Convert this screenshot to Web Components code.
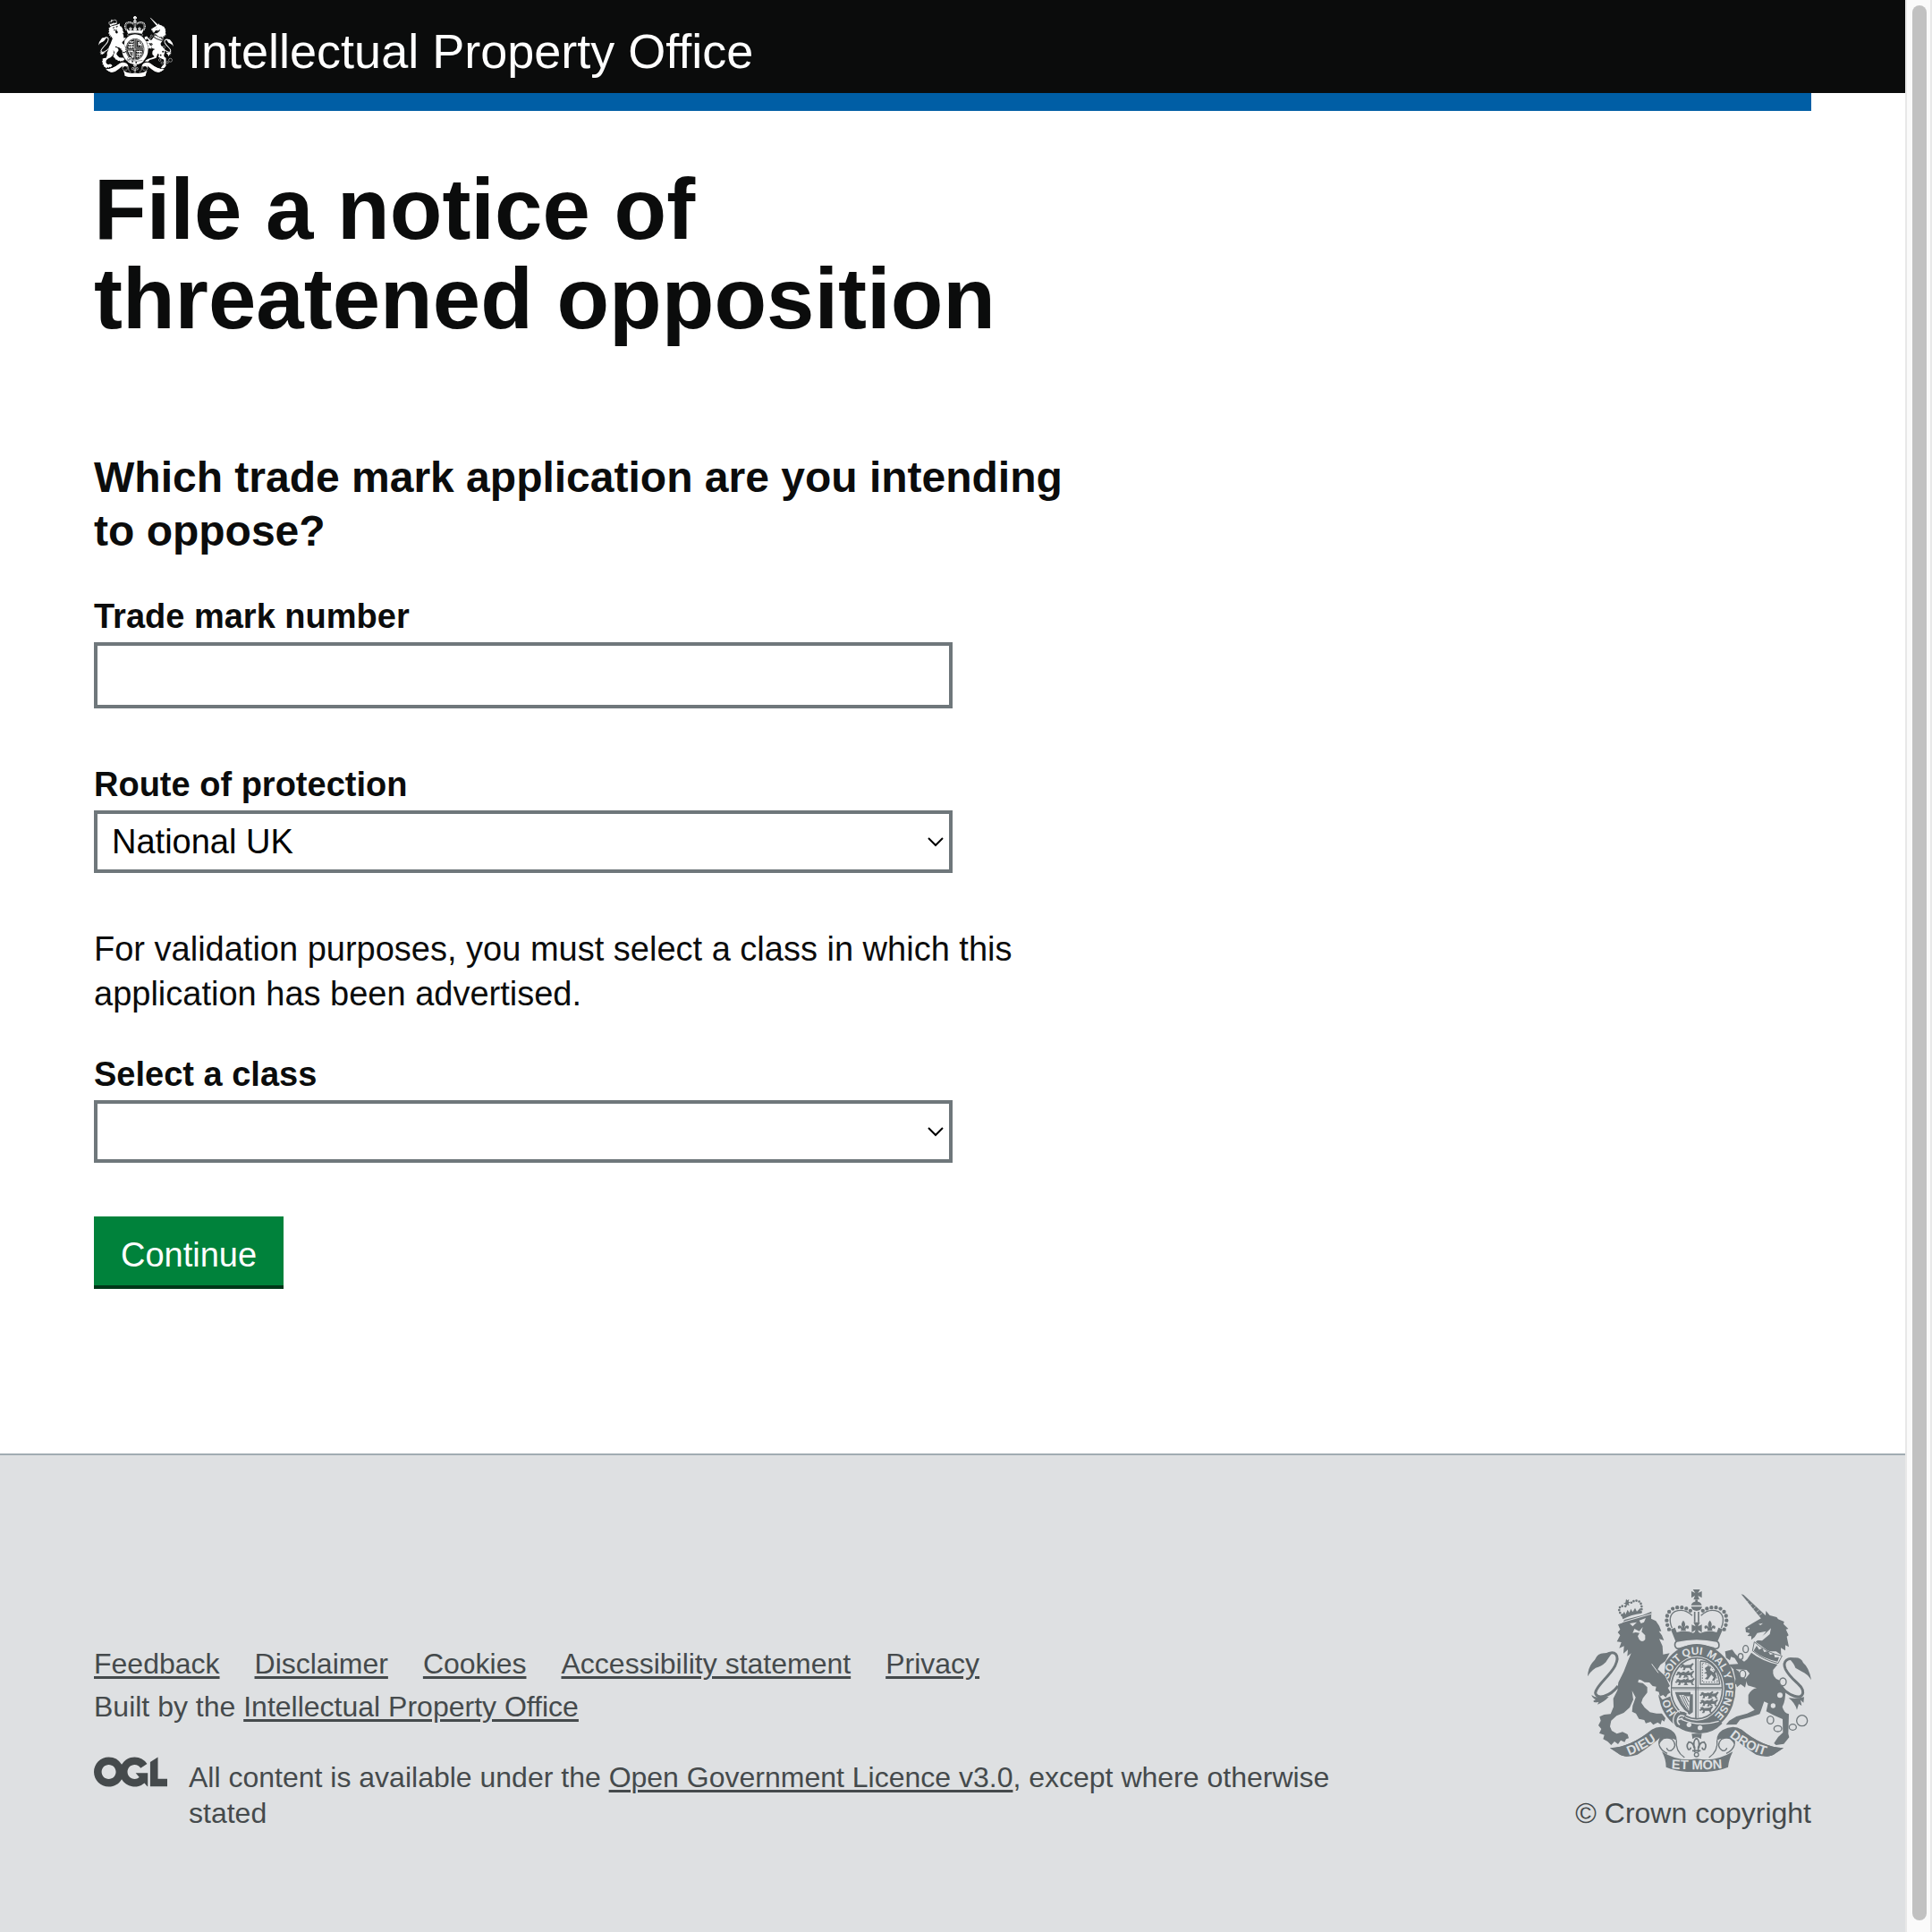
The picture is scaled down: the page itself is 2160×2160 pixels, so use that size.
<!DOCTYPE html>
<html lang="en">
<head>
<meta charset="utf-8">
<title>File a notice of threatened opposition</title>
<style>
  body { margin: 0; font-family: "Liberation Sans", Arial, sans-serif; color: #0b0c0c; background: #fff; }
</style>
</head>
<body>
<ipo-app></ipo-app>

<template id="crest-tpl">
  <style>
    :host { display: block; }
    svg { display: block; width: 100%; height: auto; }
    text { font: bold 44px "Liberation Sans", Arial, sans-serif; fill: var(--crest-gap); }
    .ring { font-size: 36px; }
    :host([plain]) text, :host([plain]) .fine { display: none; }
    .gap { fill: var(--crest-gap); }
    .line { fill: none; stroke: currentColor; }
    .gapline { fill: none; stroke: var(--crest-gap); }
  </style>
  <svg viewBox="105 50 750 613" fill="currentColor" role="img" aria-label="Royal coat of arms">
    <defs>
      <path id="ring" d="M471 496A98 114 0 0 1 471 268A98 114 0 0 1 471 496"/>
      <path id="left-scroll" d="M244 607Q300 586 356 543"/>
      <path id="mid-scroll" d="M382 650Q470 658 566 649"/>
      <path id="right-scroll" d="M580 543Q638 592 716 610"/>
      <g id="passant">
        <path d="M0 3l7-3 6 4 18-1 8-6 4 3-6 8-2 7 6 5-8 1-4-8-13 0-3 8-8 0 4-6-2-5-7 4-4-4 6-3z"/>
      </g>
      <g id="lily">
        <path d="M0-16Q-10-5-4 6L-4 17H4V6Q10-5 0-16Z"/>
        <path d="M-4 8Q-8-3-17 2Q-21 9-14 13Q-12 7-7 13L-9 19H9L7 13Q12 7 14 13Q21 9 17 2Q8-3 4 8Z"/>
      </g>
    </defs>

    <!-- crown -->
    <path d="M458 50H482L475 62 488 56V78L475 71 480 84H460L465 71 453 78V56L466 62Z"/>
    <path d="M466 84h8v8h-8z"/>
    <path d="M452 103A19 18 0 0 1 488 103ZM452 108H489A19 18 0 0 1 452 108Z"/>
    <path class="line" stroke-width="13" stroke-linecap="round" stroke-dasharray="0 15.5" d="M378 184C366 160 366 128 390 115C414 104 440 112 458 128"/>
    <path class="line" stroke-width="13" stroke-linecap="round" stroke-dasharray="0 15.5" d="M563 184C575 160 575 128 551 115C527 104 501 112 483 128"/>
    <path class="line" stroke-width="4" d="M388 180C378 155 380 134 398 124C418 116 440 122 456 138M553 180C563 155 561 134 543 124C523 116 501 122 485 138"/>
    <path class="line" stroke-width="5" d="M464 125V160M477 125V160"/>
    <path d="M384 184L398 178 404 194Q424 188 446 192L458 196Q470 190 484 196L498 192Q518 188 538 194L544 178 558 184 541 224Q470 208 400 224Z"/>
    <use href="#lily" x="426" y="170"/>
    <use href="#lily" x="515" y="170"/>
    <path d="M460 160H482L475 174 488 168V194L475 186 480 200H461L467 186 454 194V168L467 174Z"/>
    <path class="line" stroke-width="5" d="M404 224Q470 208 538 224Q548 228 545 243Q540 252 528 247Q470 228 416 247Q402 252 398 240Q396 228 404 224Z"/>

    <!-- garter and shield -->
    <ellipse cx="471" cy="382" rx="130" ry="149"/>
    <ellipse class="gap" cx="471" cy="382" rx="92" ry="108"/>
    <ellipse class="line" cx="471" cy="382" rx="86" ry="102" stroke-width="5"/>
    <g class="line" stroke-width="5"><path d="M468 280V484M385 380H557"/><path stroke-width="2" d="M475 286V480M390 386H552"/></g>
    <use href="#passant" transform="translate(418 300)"/>
    <use href="#passant" transform="translate(404 325)"/>
    <use href="#passant" transform="translate(420 325)"/>
    <use href="#passant" transform="translate(402 350)"/>
    <use href="#passant" transform="translate(422 350)"/>
    <g transform="translate(480 0)">
      <use href="#passant" transform="translate(4 394)"/>
      <use href="#passant" transform="translate(22 396)"/>
      <use href="#passant" transform="translate(4 420)"/>
      <use href="#passant" transform="translate(20 421)"/>
      <use href="#passant" transform="translate(3 444)"/>
    </g>
    <path class="line" stroke-width="4" d="M483 290V368H548M483 290Q540 290 548 368"/>
    <path class="line" stroke-width="3" stroke-dasharray="5 4" d="M490 300V361H541M490 297Q530 300 541 361"/>
    <path d="M498 314l12-8 9 6-4 8 12 8 11-14 3 4-8 15 4 10-7 14-8-2 6-10-8-9-12 16-10-2 8-8-2-9-9-2 9-6-4-6z"/>
    <path d="M398 394H450V402H458V462L446 470Q410 440 398 394ZM412 404Q418 436 445 457L448 408Q432 410 426 404Z" fill-rule="evenodd"/>
    <path class="line" stroke-width="3" d="M419 405L442 453M427 407L443 441M435 409L445 428M413 409L435 450"/>
    <text class="ring"><textPath href="#ring" startOffset="78">HO</textPath></text>
    <text class="ring"><textPath href="#ring" startOffset="196">SOIT</textPath></text>
    <text class="ring"><textPath href="#ring" startOffset="287">QUI</textPath></text>
    <text class="ring"><textPath href="#ring" startOffset="365">MAL</textPath></text>
    <text class="ring"><textPath href="#ring" startOffset="447">Y</textPath></text>
    <text class="ring"><textPath href="#ring" startOffset="480">PENSE</textPath></text>
    <path d="M400 474Q420 452 438 466L430 482Q480 506 540 489L557 499Q520 538 470 532Q440 528 416 510L404 513Q386 498 400 474Z"/>
    <path class="gapline" stroke-width="4" d="M420 486Q480 512 545 492"/>
    <path class="gapline" stroke-width="4" d="M440 464Q428 452 410 458Q392 468 392 492Q394 508 406 516"/>
    <path class="gapline" stroke-width="5" d="M430 476Q414 468 408 482Q402 496 414 504M405 488L424 482"/>
    <circle class="gap" cx="445" cy="504" r="8"/><circle class="gap" cx="482" cy="514" r="8"/>
    <!-- pendant lily -->
    <path d="M454 534H488L485 552Q470 540 457 552Z"/>
    <path class="line" stroke-width="5" d="M470 548Q456 562 464 580L464 596M470 548Q484 562 476 580L476 596M462 582Q460 562 444 562Q434 574 443 587Q450 588 451 580M478 582Q480 562 496 562Q506 574 497 587Q490 588 489 580M456 591H484"/>
    <circle class="line" cx="470" cy="604" r="7" stroke-width="4"/>

    <!-- lion -->
    <path class="gap" d="M318 292L350 262 366 300 362 335 384 368 384 408 356 420 324 380Z"/>
    <path d="M207 168L222 162 228 152 290 136 319 124 318 148 334 156 345 172 352 190 344 190 354 204 361 221 345 216 356 240 358 268 380 264 366 290 349 303 340 318 365 340 374 360 381 374 374 380 383 396 374 401 367 412 358 404 347 409 344 394 332 390 335 376 323 374 312 362 296 361 284 354 276 352 274 362 290 364 305 378 305 396 290 415 285 430 296 446 314 462 336 466 354 466 366 482 362 493 354 488 350 503 340 496 325 504 316 494 300 499 295 488 277 484 267 466 254 460 256 440 266 412 254 390 258 420 246 446 226 464 202 474 184 490 180 510 186 524 203 534 222 528 239 536 243 549 234 552 229 562 216 556 207 569 195 560 184 572 172 560 157 552 161 538 144 532 151 518 141 506 149 490 145 477 160 470 182 468 192 444 191 416 205 388 208 362 226 326 240 290 251 264 238 274 240 252 225 265 227 240 211 247 218 227 203 225 214 204 206 194 214 184Z"/>
    <path class="gap" d="M246 164L270 160 262 168 256 174ZM278 154L300 146 294 160 284 164ZM262 182L278 190 290 176 286 192 298 204 298 218Q288 230 278 218L273 207 279 196 266 194 256 196Z"/>
    <path class="gapline fine" stroke-width="3" d="M320 300L342 330M214 162L318 132"/>
    <!-- lion's crown -->
    <path class="line" stroke-width="8" stroke-linecap="round" stroke-dasharray="0 9.5" d="M220 136C205 122 210 106 222 106Q232 108 238 104M284 126C290 108 284 90 272 88Q258 86 248 98"/>
    <path d="M219 138L228 124 232 134 239 118 245 128 250 115 256 126 264 112 270 124 282 112 285 130Q252 134 223 150ZM234 82l4 5 6-4-2 8 7 2-7 4 3 8-7-3-4 5-2-8-7-2 7-3z"/>
    <!-- lion's tail -->
    <path class="line" stroke-width="9" d="M164 270C198 250 214 272 197 306C180 340 132 374 131 397C134 420 178 412 207 374"/>
    <path d="M105 342Q106 308 129 286Q139 262 163 264L188 262Q170 286 166 294Q150 310 132 313Q116 323 105 342ZM118 404Q130 415 153 411L176 410Q162 426 138 436L142 427Q125 432 124 424L132 419Q121 415 118 404Z"/>

    <!-- unicorn -->
    <path d="M620 66L628 68 704 139 691 153Z"/>
    <path class="gapline fine" stroke-width="2" d="M644 88L640 92M656 98L650 104M668 109L661 115M680 119L671 126M690 130L680 137"/>
    <path d="M634 178L657 164 684 148 702 138 703 122 716 137 739 143 744 150 764 158 762 166 778 182 770 184 779 204 773 208 780 243 768 237 768 255 753 246 754 270 737 258 711 258 683 236 668 226 689 210 704 190 674 196 665 210 654 219 654 207 641 206 649 197 636 193Z"/>
    <path class="gap" d="M678 166l15-3-8 7zM700 199L720 180 716 200 690 222 672 220ZM642 180l7 0-4 5z"/>
    <path class="gap" d="M662 224Q706 262 759 271L744 300Q694 288 656 258Z"/>
    <path class="line" stroke-width="3" d="M664 226Q706 264 757 273L744 298Q694 286 658 256Z"/>
    <path d="M664 252L672 239 680 252 691 247 697 260 710 257 717 269 730 266 733 278 747 277 742 292Q690 280 662 256Z"/>
    <path d="M654 262Q690 290 742 302L727 320Q724 346 746 354L768 386Q770 422 758 444Q764 466 780 468L778 534 781 546 763 568 737 572 730 566 744 545 760 530 759 485 730 472 704 459 710 432 697 426 687 455 682 468 650 478 616 487 604 503 569 504 580 490 604 476 640 466 665 454 644 432 644 404Q654 384 672 381L642 372 634 350 648 332 638 320 602 318 624 342 633 378 618 368 606 378 602 364 614 355 594 318 578 302 610 300 598 280 586 276 582 288 569 279 566 258 590 252 600 266 616 282 630 292 640 284Z"/>
    <path d="M594 320L610 322 620 340 639 352 633 379 612 358 598 371 601 350Z"/>
    <!-- unicorn's tail -->
    <path class="line" stroke-width="9" d="M804 288C778 274 756 291 769 318C790 358 830 372 827 397C824 422 780 410 747 369"/>
    <path d="M781 282Q820 272 828 296Q848 312 855 354Q844 334 823 325L802 313Q798 300 781 282ZM779 414Q806 418 831 411L829 430 819 421 823 440 813 434 807 454Q800 430 779 414Z"/>
    <!-- chain -->
    <g fill="var(--crest-gap)" stroke="currentColor" stroke-width="4">
      <ellipse cx="635" cy="250" rx="9" ry="12"/><ellipse cx="618" cy="275" rx="8" ry="10"/>
      <ellipse cx="625" cy="334" rx="10" ry="13"/><ellipse cx="760" cy="360" rx="11" ry="13"/>
      <ellipse cx="718" cy="488" rx="11" ry="13"/><ellipse cx="743" cy="517" rx="13" ry="10"/>
      <ellipse cx="793" cy="512" rx="12" ry="10"/><circle cx="824" cy="490" r="18"/>
    </g>
    <circle class="gap" cx="750" cy="405" r="9"/><circle class="gap" cx="727" cy="440" r="8"/>

    <!-- motto scroll -->
    <path d="M180 582Q250 578 320 520Q350 502 385 522Q405 536 404 556Q385 545 360 552Q350 560 346 568Q342 555 350 540Q310 570 272 600Q230 620 207 600Z"/>
    <path d="M762 582Q690 578 622 520Q592 502 557 522Q537 536 538 556Q557 545 582 552Q592 560 596 568Q600 555 592 540Q632 570 670 600Q712 620 735 600Z"/>
    <path class="line" stroke-width="4" d="M345 572Q340 546 368 545L388 552Q408 574 386 590Q374 594 370 582M597 572Q602 546 574 545L554 552Q534 574 556 590Q568 594 572 582M345 572Q350 590 372 600M597 572Q592 590 570 600M403 555Q398 592 430 614M539 555Q544 592 512 614"/>
    <path d="M354 594Q410 630 471 618Q534 630 592 594Q578 622 576 646Q530 664 471 663Q412 664 368 646Q368 620 354 594Z"/>
    <path d="M180 582Q250 578 322 520L356 540Q312 580 272 604Q230 618 207 600Z"/>
    <path d="M762 582Q690 578 620 520L586 540Q630 580 670 604Q712 618 735 600Z"/>
    <text><textPath href="#left-scroll">DIEU</textPath></text>
    <text><textPath href="#mid-scroll" startOffset="4">ET MON</textPath></text>
    <text><textPath href="#right-scroll">DROIT</textPath></text>
  </svg>
</template>

<template id="header-tpl">
  <style>
    :host { display: block; background: #0b0c0c; }
    .wrap { max-width: 1920px; margin: 0 auto; }
    a { display: flex; align-items: center; gap: 16px; height: 104px; padding-left: 5px; color: #fff; text-decoration: none; font-size: 54px; line-height: 60px; }
    ipo-crest { width: 84px; --crest-gap: #0b0c0c; }
    span { padding-top: 10px; }
    .under { background: #fff; }
    .bar { height: 20px; background: #005ea5; }
  </style>
  <header>
    <div class="wrap"><a href="#"><ipo-crest plain></ipo-crest><span><slot></slot></span></a></div>
    <div class="under"><div class="wrap bar"></div></div>
  </header>
</template>

<template id="field-tpl">
  <style>
    :host { display: block; max-width: 960px; }
    label { display: block; font-size: 38px; line-height: 50px; font-weight: bold; margin-bottom: 4px; }
    .box { display: grid; align-items: center; }
    .box > * { grid-area: 1 / 1; }
    input, select { box-sizing: border-box; width: 100%; border: 4px solid #6f777b; border-radius: 0; background: #fff; font: 38px "Liberation Sans", Arial, sans-serif; color: #000; appearance: none; margin: 0; outline: 0; }
    input { height: 74px; padding: 8px; }
    select { height: 70px; padding: 0 40px 0 16px; }
    svg { justify-self: end; width: 18px; height: 12px; margin-right: 10px; pointer-events: none; fill: none; stroke: #000; stroke-width: 2; }
  </style>
  <label for="control"></label>
  <div class="box"></div>
</template>

<template id="button-tpl">
  <style>
    :host { display: block; }
    button { display: block; border: 0; border-radius: 0; background: #00823b; color: #fff; font: 38px/50px "Liberation Sans", Arial, sans-serif; padding: 18px 30px 9px; box-shadow: 0 4px 0 #003618; cursor: pointer; }
  </style>
  <button type="submit"><slot></slot></button>
</template>

<template id="footer-tpl">
  <style>
    :host { display: block; flex: 1; background: #dee0e2; border-top: 2px solid #a1acb2; color: #454a4c; font-size: 32px; line-height: 40px; }
    .wrap { max-width: 1920px; margin: 0 auto; padding: 150px 0 112px; display: flex; justify-content: space-between; align-items: flex-end; }
    a { color: inherit; text-decoration-thickness: 3px; text-underline-offset: 3px; }
    ul { display: flex; flex-wrap: wrap; gap: 39px; list-style: none; margin: 0 0 8px; padding: 0; }
    p { margin: 0; }
    .licence { display: flex; align-items: flex-start; gap: 24px; margin-top: 36px; max-width: 1400px; }
    .licence p { padding-top: 3px; }
    .licence svg { flex: none; width: 82px; height: 34px; fill: #454a4c; }
    .copy { display: flex; flex-direction: column; align-items: flex-end; gap: 26px; }
    ipo-crest { width: 250px; color: #6f777b; --crest-gap: #dee0e2; }
  </style>
  <footer class="wrap">
    <div>
      <ul>
        <li><a href="#">Feedback</a></li>
        <li><a href="#">Disclaimer</a></li>
        <li><a href="#">Cookies</a></li>
        <li><a href="#">Accessibility statement</a></li>
        <li><a href="#">Privacy</a></li>
      </ul>
      <p>Built by the <a href="#">Intellectual Property Office</a></p>
      <div class="licence">
        <svg viewBox="0 0 483.2 195.7" role="img" aria-label="Open Government Licence"><path d="M421.5 142.8V.1l-50.7 32.3v161.1h112.4v-50.7zm-122.3-9.6A47.12 47.12 0 0 1 221 97.8c0-26 21.1-47.1 47.1-47.1 16.7 0 31.4 8.7 39.7 21.8l42.7-27.2A97.63 97.63 0 0 0 268.1 0c-36.5 0-68.3 20.1-85.1 49.7A98 98 0 0 0 97.8 0C43.9 0 0 43.9 0 97.8s43.9 97.8 97.8 97.8c36.5 0 68.3-20.1 85.1-49.7a97.76 97.76 0 0 0 149.6 25.4l19.4 22.2h3v-87.8h-80l24.3 27.5zM97.8 145c-26 0-47.1-21.1-47.1-47.1s21.1-47.1 47.1-47.1 47.1 21.1 47.1 47.1S123.8 145 97.8 145"/></svg>
        <p>All content is available under the <a href="#">Open Government Licence v3.0</a>, except where otherwise stated</p>
      </div>
    </div>
    <div class="copy">
      <ipo-crest></ipo-crest>
      <span>© Crown copyright</span>
    </div>
  </footer>
</template>

<template id="scrollbar-tpl">
  <style>
    :host { display: block; box-sizing: border-box; width: 30px; padding: 6px 4px 13px 6px; background: #fafafa; border: solid #e8e8e8; border-width: 0 2px; }
    .thumb { width: 16px; height: 100%; border-radius: 8px; background: #c1c1c1; }
  </style>
  <div class="thumb"></div>
</template>

<template id="app-tpl">
  <style>
    :host { display: flex; height: 100vh; overflow: hidden; }
    .page { flex: 1; min-width: 0; display: flex; flex-direction: column; }
    main { max-width: 1920px; width: 100%; margin: 0 auto; padding: 60px 0 188px; }
    .column { max-width: 1120px; }
    h1 { font-size: 96px; line-height: 100px; margin: 0 0 120px; }
    h2 { font-size: 48px; line-height: 60px; margin: 0 0 40px; }
    p { font-size: 38px; line-height: 50px; margin: 0 0 40px; }
    ipo-field { margin-bottom: 60px; }
  </style>
  <div class="page">
    <ipo-header>Intellectual Property Office</ipo-header>
    <main>
      <div class="column">
        <h1>File a notice of threatened opposition</h1>
        <h2>Which trade mark application are you intending to oppose?</h2>
        <form>
          <ipo-field label="Trade mark number"></ipo-field>
          <ipo-field label="Route of protection" options="National UK|International UK|International EU"></ipo-field>
          <p>For validation purposes, you must select a class in which this application has been advertised.</p>
          <ipo-field label="Select a class" options="|1|2|3|4|5"></ipo-field>
          <ipo-button>Continue</ipo-button>
        </form>
      </div>
    </main>
    <ipo-footer></ipo-footer>
  </div>
  <ipo-scrollbar></ipo-scrollbar>
</template>

<script>
  class TemplateElement extends HTMLElement {
    connectedCallback() {
      if (this.shadowRoot) return;
      const root = this.attachShadow({ mode: "open" });
      root.append(document.getElementById(this.constructor.template).content.cloneNode(true));
      this.ready(root);
    }
    ready() {}
  }
  class IpoCrest extends TemplateElement { static template = "crest-tpl"; }
  class IpoHeader extends TemplateElement { static template = "header-tpl"; }
  class IpoButton extends TemplateElement { static template = "button-tpl"; }
  class IpoFooter extends TemplateElement { static template = "footer-tpl"; }
  class IpoScrollbar extends TemplateElement { static template = "scrollbar-tpl"; }
  class IpoApp extends TemplateElement { static template = "app-tpl"; }
  class IpoField extends TemplateElement {
    static template = "field-tpl";
    ready(root) {
      root.querySelector("label").textContent = this.getAttribute("label");
      const box = root.querySelector(".box");
      const options = this.getAttribute("options");
      const control = document.createElement(options === null ? "input" : "select");
      control.id = "control";
      box.append(control);
      if (options === null) { control.type = "text"; return; }
      for (const name of options.split("|")) control.add(new Option(name, name));
      box.insertAdjacentHTML("beforeend", '<svg viewBox="0 0 18 12" aria-hidden="true"><path d="M1 2L9 10L17 2"/></svg>');
    }
  }
  customElements.define("ipo-crest", IpoCrest);
  customElements.define("ipo-header", IpoHeader);
  customElements.define("ipo-field", IpoField);
  customElements.define("ipo-button", IpoButton);
  customElements.define("ipo-footer", IpoFooter);
  customElements.define("ipo-scrollbar", IpoScrollbar);
  customElements.define("ipo-app", IpoApp);
</script>
</body>
</html>
